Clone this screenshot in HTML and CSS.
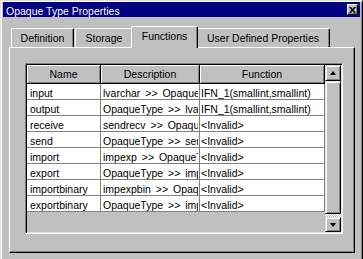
FILE: index.html
```html
<!DOCTYPE html>
<html>
<head>
<meta charset="utf-8">
<link rel="stylesheet" href="styles.css">
</head>
<body>
<div class="window">
  <div class="titlebar">
    <span class="title">Opaque Type Properties</span>
    <span class="close"><svg width="7" height="6" viewBox="0 0 7 6"><path d="M0 0h2l1.5 2L5 0h2L4.5 3L7 6H5L3.5 4L2 6H0l2.5-3z" fill="#000"/></svg></span>
  </div>
  <div class="body">
    <div class="tabs">
      <div class="tab t-def">Definition</div>
      <div class="tab t-sto">Storage</div>
      <div class="tab active t-fun">Functions</div>
      <div class="tab t-udp">User Defined Properties</div>
    </div>
    <div class="panel">
      <div class="grid">
        <div class="table">
          <div class="row head">
            <div class="c c1">Name</div>
            <div class="c c2">Description</div>
            <div class="c c3">Function</div>
          </div>
          <div class="row"><div class="c c1">input</div><div class="c c2"><span class="clip">lvarchar &gt;&gt; OpaqueType</span></div><div class="c c3"><span class="clip">IFN_1(smallint,smallint)</span></div></div>
          <div class="row"><div class="c c1">output</div><div class="c c2"><span class="clip">OpaqueType &gt;&gt; lvarchar</span></div><div class="c c3"><span class="clip">IFN_1(smallint,smallint)</span></div></div>
          <div class="row"><div class="c c1">receive</div><div class="c c2"><span class="clip">sendrecv &gt;&gt; OpaqueType</span></div><div class="c c3">&lt;Invalid&gt;</div></div>
          <div class="row"><div class="c c1">send</div><div class="c c2"><span class="clip">OpaqueType &gt;&gt; sendrecv</span></div><div class="c c3">&lt;Invalid&gt;</div></div>
          <div class="row"><div class="c c1">import</div><div class="c c2"><span class="clip">impexp &gt;&gt; OpaqueType</span></div><div class="c c3">&lt;Invalid&gt;</div></div>
          <div class="row"><div class="c c1">export</div><div class="c c2"><span class="clip">OpaqueType &gt;&gt; impexp</span></div><div class="c c3">&lt;Invalid&gt;</div></div>
          <div class="row"><div class="c c1">importbinary</div><div class="c c2"><span class="clip">impexpbin &gt;&gt; OpaqueType</span></div><div class="c c3">&lt;Invalid&gt;</div></div>
          <div class="row"><div class="c c1">exportbinary</div><div class="c c2"><span class="clip">OpaqueType &gt;&gt; impexpbin</span></div><div class="c c3">&lt;Invalid&gt;</div></div>
        </div>
        <div class="scrollbar">
          <div class="sbtn up"><span class="arr-up"></span></div>
          <div class="thumb"></div>
          <div class="track"></div>
          <div class="sbtn down"><span class="arr-down"></span></div>
        </div>
      </div>
    </div>
  </div>
</div>
</body>
</html>
```

FILE: styles.css
```css
* { box-sizing: border-box; }
html, body { margin: 0; padding: 0; }
body {
  background: #c0c0c0;
  font-family: "Liberation Sans", Arial, sans-serif;
  font-size: 10.5px;
  color: #000;
  overflow: hidden;
  width: 363px;
  height: 259px;
}
.window {
  width: 363px;
  height: 264px;
  background: #c0c0c0;
  border: 1px solid;
  border-color: #dfdfdf #000 #000 #dfdfdf;
  box-shadow: inset 1px 1px #fff, inset -1px -1px #808080;
  padding: 1px 2px 2px 2px;
}
.titlebar {
  height: 15px;
  background: #000080;
  color: #fff;
  display: flex;
  align-items: flex-start;
  padding: 3px 0 0 3px;
  line-height: 12px;
}
.title { white-space: nowrap; }
.close {
  margin-left: auto;
  margin-right: 2px;
  margin-top: -1px;
  width: 11px;
  height: 11px;
  background: #c0c0c0;
  border: 1px solid;
  border-color: #fff #000 #000 #fff;
  box-shadow: inset -1px -1px #808080;
  display: flex;
  align-items: center;
  justify-content: center;
  padding-right: 1px;
}
.close svg { display: block; }
.body {
  padding: 9px 0 0 6px;
}
.tabs {
  display: flex;
  align-items: flex-end;
  height: 21px;
  padding-left: 2px;
}
.tab {
  height: 19px;
  background: #c0c0c0;
  border-top: 1px solid #fff;
  border-left: 1px solid #fff;
  border-right: 1px solid #000;
  box-shadow: inset -1px 0 #808080;
  border-radius: 2px 2px 0 0;
  text-align: center;
  line-height: 12px;
  padding-top: 3px;
  white-space: nowrap;
}
.t-def { width: 63px; margin-right: 1px; }
.t-sto { width: 58px; }
.t-fun { width: 67px; margin: 0 -2px -1px -2px; }
.t-udp { width: 134px; }
.tab.active {
  height: 22px;
  position: relative;
  z-index: 1;
}
.panel {
  width: 346px;
  height: 206px;
  background: #c0c0c0;
  border: 1px solid;
  border-color: #fff #000 #000 #fff;
  box-shadow: inset -1px -1px #808080;
  padding: 15px 0 0 15px;
}
.grid {
  width: 318px;
  height: 171px;
  display: flex;
  border: 1px solid;
  border-color: #808080 #fff #fff #808080;
  box-shadow: inset 1px 1px #000, inset -1px -1px #dfdfdf;
  padding: 1px;
  background: #c0c0c0;
}
.table {
  width: 298px;
  display: flex;
  flex-direction: column;
  overflow: hidden;
}
.row {
  display: flex;
  height: 16px;
  flex: none;
}
.c {
  height: 16px;
  flex: none;
  background: #fff;
  border-right: 1px solid #808080;
  border-bottom: 1px solid #808080;
  line-height: 12px;
  padding-top: 3px;
  white-space: nowrap;
  overflow: hidden;
}
.clip {
  display: block;
  overflow: hidden;
  white-space: nowrap;
}
.c1 { width: 74px; padding-left: 3px; }
.c2 { width: 99px; padding-left: 2px; padding-right: 1px; word-spacing: 2px; }
.c3 { width: 125px; padding-left: 1px; }
.head { height: 19px; }
.head .c {
  height: 19px;
  background: #c0c0c0;
  border-right: 1px solid #000;
  border-bottom: 1px solid #000;
  box-shadow: inset 1px 1px #fff, inset -1px -1px #808080;
  text-align: center;
  padding: 3px 0 0 0;
  word-spacing: normal;
}
.scrollbar {
  width: 16px;
  display: flex;
  flex-direction: column;
}
.sbtn, .thumb {
  background: #c0c0c0;
  border: 1px solid;
  border-color: #dfdfdf #000 #000 #dfdfdf;
  box-shadow: inset 1px 1px #fff, inset -1px -1px #808080;
}
.sbtn {
  display: flex;
  align-items: center;
  justify-content: center;
  flex: none;
}
.up { height: 16px; }
.down { height: 15px; }
.thumb { flex: 1; }
.track {
  height: 3px;
  flex: none;
  background: repeating-conic-gradient(#fff 0 25%, #c0c0c0 0 50%) 0 0 / 2px 2px;
}
.arr-up {
  width: 0; height: 0;
  border-left: 3.5px solid transparent;
  border-right: 3.5px solid transparent;
  border-bottom: 4px solid #000;
}
.arr-down {
  width: 0; height: 0;
  border-left: 3.5px solid transparent;
  border-right: 3.5px solid transparent;
  border-top: 4px solid #000;
}
```
